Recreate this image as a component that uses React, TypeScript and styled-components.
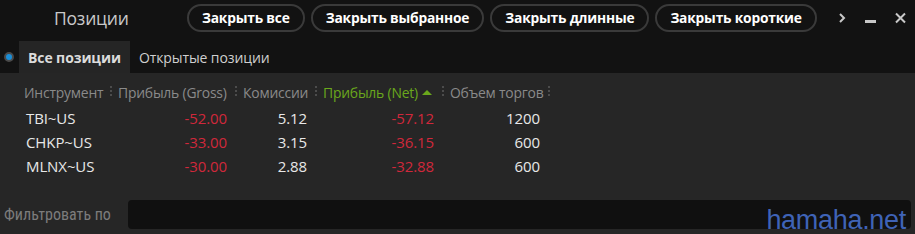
import React from "react";
import styled, { createGlobalStyle } from "styled-components";

const GlobalStyle = createGlobalStyle`
  html, body {
    margin: 0;
    padding: 0;
    background: #121212;
  }
  * {
    box-sizing: border-box;
  }
`;

interface Position {
  symbol: string;
  gross: string;
  commission: string;
  net: string;
  volume: string;
}

const positions: Position[] = [
  { symbol: "TBI~US", gross: "-52.00", commission: "5.12", net: "-57.12", volume: "1200" },
  { symbol: "CHKP~US", gross: "-33.00", commission: "3.15", net: "-36.15", volume: "600" },
  { symbol: "MLNX~US", gross: "-30.00", commission: "2.88", net: "-32.88", volume: "600" },
];

const Window = styled.div`
  position: relative;
  width: 915px;
  height: 234px;
  display: flex;
  flex-direction: column;
  background: #121212;
  font-family: "Open Sans", "Noto Sans", sans-serif;
  overflow: hidden;
`;

const TopBar = styled.div`
  height: 34px;
  display: flex;
  align-items: center;
  padding-top: 1px;
`;

const Title = styled.div`
  width: 187px;
  padding-left: 54px;
  font-size: 17.5px;
  color: #c9c9c9;
  letter-spacing: -0.2px;
`;

const Actions = styled.div`
  display: flex;
  gap: 6px;
`;

const PillButton = styled.button`
  height: 28px;
  padding: 0 13px;
  border: 2px solid #3a3a3a;
  border-radius: 14px;
  background: #121212;
  color: #ffffff;
  font-family: inherit;
  font-size: 13.8px;
  font-weight: 700;
  letter-spacing: -0.2px;
  white-space: nowrap;
`;

const Controls = styled.div`
  display: flex;
  align-items: center;
  margin-left: 21px;
  gap: 19px;
`;

const ControlIcon = styled.svg`
  display: block;
  color: #c8c8c8;
`;

const TabsRow = styled.div`
  height: 32px;
  margin-top: 7px;
  display: flex;
  align-items: stretch;
`;

const Radio = styled.span`
  width: 10px;
  height: 10px;
  margin: 11px 5px 0 4px;
  border-radius: 50%;
  background: #1a8fd8;
  border: 2px solid #4a4a4a;
`;

const Tab = styled.div<{ $active?: boolean }>`
  display: flex;
  align-items: center;
  padding: 0 9px;
  font-size: 14px;
  font-weight: ${({ $active }) => ($active ? 700 : 400)};
  color: ${({ $active }) => ($active ? "#dcdcdc" : "#cfcfcf")};
  background: ${({ $active }) => ($active ? "#252525" : "transparent")};
  letter-spacing: -0.1px;
`;

const Panel = styled.div`
  flex: 1;
  background: #262626;
  display: flex;
  flex-direction: column;
  padding-top: 9px;
`;

const Grid = styled.div`
  display: grid;
  grid-template-columns: 94px 125px 80px 127px 106px;
  margin-left: 17px;
  grid-auto-rows: 24px;
`;

const HeaderCell = styled.div<{ $sorted?: boolean }>`
  position: relative;
  display: flex;
  align-items: center;
  gap: 4px;
  height: 20px;
  padding-left: 7px;
  font-size: 13.9px;
  color: ${({ $sorted }) => ($sorted ? "#6aa81c" : "#8a8a8a")};
  letter-spacing: -0.2px;
  white-space: nowrap;

  &::after {
    content: "";
    position: absolute;
    right: -1px;
    top: 4px;
    width: 2px;
    height: 12px;
    background: repeating-linear-gradient(to bottom, #4c4c4c 0 2px, transparent 2px 4px);
  }
`;

const SortArrow = styled.span`
  width: 0;
  height: 0;
  border-left: 5px solid transparent;
  border-right: 5px solid transparent;
  border-bottom: 5px solid #6aa81c;
`;

const Cell = styled.div<{ $tone?: "loss" | "plain"; $align?: "left" | "right" }>`
  display: flex;
  align-items: center;
  justify-content: ${({ $align }) => ($align === "left" ? "flex-start" : "flex-end")};
  padding: ${({ $align }) => ($align === "left" ? "0 0 0 9px" : "0 9px 0 0")};
  font-size: 15px;
  color: ${({ $tone }) => ($tone === "loss" ? "#d0283b" : "#e8e8e8")};
  letter-spacing: -0.1px;
`;

const Spacer = styled.div`
  flex: 1;
`;

const FilterRow = styled.div`
  display: flex;
  align-items: center;
  height: 30px;
  margin-bottom: 5px;
  padding-right: 4px;
`;

const FilterLabel = styled.label`
  width: 128px;
  padding-left: 4px;
  font-family: "Liberation Sans Narrow", "Roboto Condensed", "Liberation Sans", sans-serif;
  font-size: 16px;
  color: #7c7c7c;
`;

const FilterInput = styled.div`
  flex: 1;
  height: 29px;
  background: #101010;
  border-radius: 4px;
`;

const Watermark = styled.div`
  position: absolute;
  right: 9px;
  bottom: 0;
  font-family: "Liberation Sans", Arial, sans-serif;
  font-size: 27px;
  line-height: 27px;
  color: #3f63b6;
  letter-spacing: -0.3px;
  pointer-events: none;
`;

export default function App() {
  return (
    <>
      <GlobalStyle />
      <Window>
        <TopBar>
          <Title>Позиции</Title>
          <Actions>
            <PillButton>Закрыть все</PillButton>
            <PillButton>Закрыть выбранное</PillButton>
            <PillButton>Закрыть длинные</PillButton>
            <PillButton>Закрыть короткие</PillButton>
          </Actions>
          <Controls>
            <ControlIcon width="8" height="12" viewBox="0 0 8 12">
              <path d="M2 2l4 4-4 4" fill="none" stroke="currentColor" strokeWidth="2" />
            </ControlIcon>
            <ControlIcon width="11" height="12" viewBox="0 0 11 12">
              <rect x="0" y="8" width="11" height="3" fill="currentColor" />
            </ControlIcon>
            <ControlIcon width="11" height="12" viewBox="0 0 11 12">
              <path d="M1 1.5l9 9M10 1.5l-9 9" fill="none" stroke="currentColor" strokeWidth="2" />
            </ControlIcon>
          </Controls>
        </TopBar>
        <TabsRow>
          <Radio />
          <Tab $active>Все позиции</Tab>
          <Tab>Открытые позиции</Tab>
        </TabsRow>
        <Panel>
          <Grid>
            <HeaderCell>Инструмент</HeaderCell>
            <HeaderCell>Прибыль (Gross)</HeaderCell>
            <HeaderCell>Комиссии</HeaderCell>
            <HeaderCell $sorted>
              Прибыль (Net)
              <SortArrow />
            </HeaderCell>
            <HeaderCell>Объем торгов</HeaderCell>
            {positions.map((p) => (
              <React.Fragment key={p.symbol}>
                <Cell $align="left">{p.symbol}</Cell>
                <Cell $tone="loss">{p.gross}</Cell>
                <Cell>{p.commission}</Cell>
                <Cell $tone="loss">{p.net}</Cell>
                <Cell>{p.volume}</Cell>
              </React.Fragment>
            ))}
          </Grid>
          <Spacer />
          <FilterRow>
            <FilterLabel>Фильтровать по</FilterLabel>
            <FilterInput />
          </FilterRow>
        </Panel>
        <Watermark>hamaha.net</Watermark>
      </Window>
    </>
  );
}
